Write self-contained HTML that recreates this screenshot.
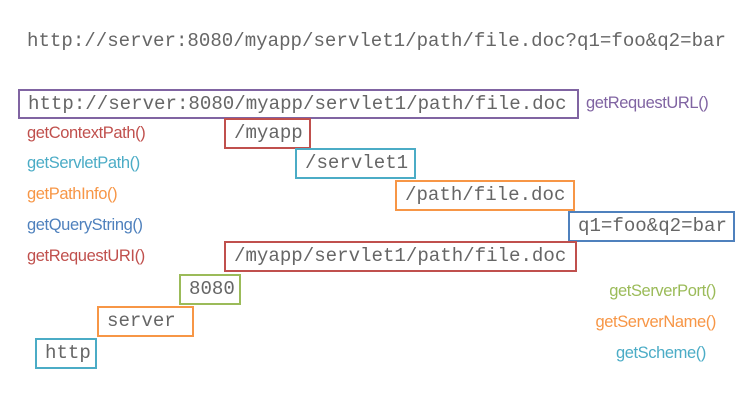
<!DOCTYPE html>
<html><head><meta charset="utf-8"><style>
body{margin:0;width:751px;height:406px;background:#fff;position:relative;overflow:hidden}
.m{position:absolute;font-family:"Liberation Mono",monospace;font-size:19.1px;color:#666;white-space:nowrap}
.b{position:absolute;box-sizing:border-box;border:2px solid;font-family:"Liberation Mono",monospace;font-size:19.1px;color:#666;white-space:nowrap;padding-left:8px;line-height:26px}
.l{position:absolute;font-family:"Liberation Sans",sans-serif;font-size:16.5px;white-space:nowrap;line-height:19px;letter-spacing:-0.4px}
.P{color:#8064a2}.R{color:#c0504d}.T{color:#4bacc6}.O{color:#f79646}.B{color:#4f81bd}.G{color:#9bbb59}
</style></head><body>
<div class="m" style="left:27px;top:30px">http://server:8080/myapp/servlet1/path/file.doc?q1=foo&amp;q2=bar</div>
<div class="b" style="left:18px;top:89px;width:561px;height:30px;border-color:#8064a2">http://server:8080/myapp/servlet1/path/file.doc</div>
<div class="l P" style="left:586px;top:94px">getRequestURL()</div>
<div class="b" style="left:224px;top:118px;width:87px;height:31px;border-color:#c0504d">/myapp</div>
<div class="b" style="left:295px;top:148px;width:121px;height:31px;border-color:#4bacc6">/servlet1</div>
<div class="b" style="left:395px;top:180px;width:180px;height:31px;border-color:#f79646">/path/file.doc</div>
<div class="b" style="left:568px;top:211px;width:167px;height:31px;border-color:#4f81bd">q1=foo&amp;q2=bar</div>
<div class="b" style="left:224px;top:241px;width:353px;height:31px;border-color:#c0504d">/myapp/servlet1/path/file.doc</div>
<div class="b" style="left:179px;top:274px;width:62px;height:31px;border-color:#9bbb59">8080</div>
<div class="b" style="left:97px;top:306px;width:97px;height:31px;border-color:#f79646">server</div>
<div class="b" style="left:35px;top:338px;width:62px;height:31px;border-color:#4bacc6">http</div>
<div class="l R" style="left:27px;top:124px">getContextPath()</div>
<div class="l T" style="left:27px;top:154px">getServletPath()</div>
<div class="l O" style="left:27px;top:185px">getPathInfo()</div>
<div class="l B" style="left:27px;top:216px">getQueryString()</div>
<div class="l R" style="left:27px;top:247px">getRequestURI()</div>
<div class="l G" style="right:35px;top:282px">getServerPort()</div>
<div class="l O" style="right:35px;top:313px">getServerName()</div>
<div class="l T" style="right:45px;top:344px">getScheme()</div>
</body></html>
